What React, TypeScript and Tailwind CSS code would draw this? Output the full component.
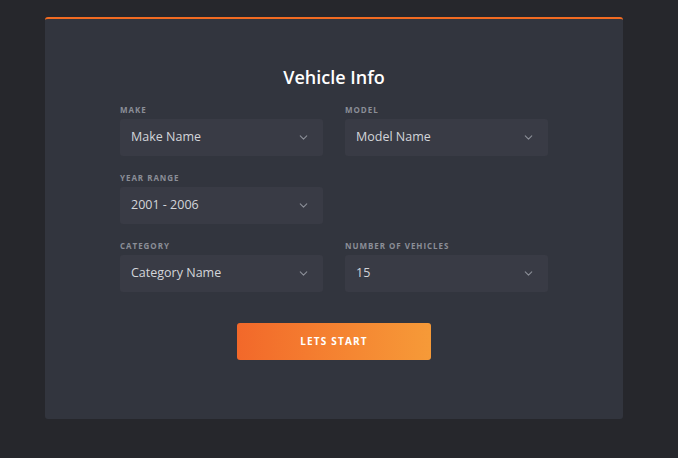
import { ChevronDown } from 'lucide-react';

type FieldProps = { label: string; value: string };

function SelectField({ label, value }: FieldProps) {
  return (
    <div className="flex flex-col">
      <span className="text-[8px] font-bold tracking-[0.12em] text-[#8b8e97] uppercase leading-none mb-[5px]">
        {label}
      </span>
      <div className="h-[37px] rounded-[3px] bg-[#393b45] flex items-center justify-between pl-[11px] pr-[13px]">
        <span className="text-[12.5px] text-[#d3d5da]">{value}</span>
        <ChevronDown className="w-[13px] h-[13px] text-[#8b8e97]" strokeWidth={2} />
      </div>
    </div>
  );
}

export default function App() {
  return (
    <main
      className="min-h-screen w-full bg-[#26272c] pt-[17px] pb-[39px] px-[45px]"
      style={{ fontFamily: '"Open Sans", "Noto Sans", sans-serif' }}
    >
      <div className="w-[578px] h-[402px] bg-[#32353e] rounded-[3px] border-t-2 border-[#f26b22] flex flex-col items-center pt-[49px]">
        <h1 className="text-[18px] font-semibold text-white leading-none mb-[20px]">Vehicle Info</h1>

        {/* Form */}
        <div className="w-[428px] grid grid-cols-2 gap-x-[22px] gap-y-[18px]">
          <SelectField label="Make" value="Make Name" />
          <SelectField label="Model" value="Model Name" />
          <SelectField label="Year Range" value="2001 - 2006" />
          <div />
          <SelectField label="Category" value="Category Name" />
          <SelectField label="Number of Vehicles" value="15" />
        </div>

        <button className="mt-[31px] w-[194px] h-[37px] rounded-[3px] bg-gradient-to-r from-[#f2682a] to-[#f69a38] text-white text-[10px] font-bold tracking-[0.12em] uppercase">
          Lets Start
        </button>
      </div>
    </main>
  );
}
